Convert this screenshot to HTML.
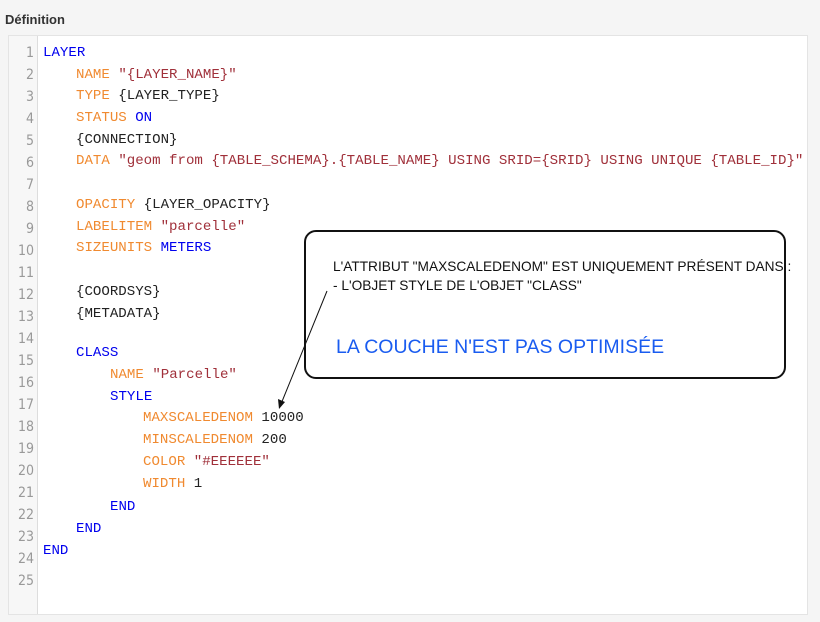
<!DOCTYPE html>
<html><head><meta charset="utf-8"><style>
body{margin:0;width:820px;height:622px;background:#f5f5f5;position:relative;overflow:hidden;font-family:"Liberation Sans",sans-serif}
.h{position:absolute;left:5px;top:12px;font-size:13px;font-weight:bold;color:#333}
.ed{position:absolute;left:8px;top:35px;width:800px;height:580px;background:#fff;border:1px solid #e4e4e4;box-sizing:border-box}
.g{position:absolute;left:0;top:0;width:28px;height:100%;background:#f7f7f7;border-right:1px solid #ddd}
.n{position:absolute;right:3px;font-size:14px;color:#999;font-family:"DejaVu Sans Condensed","Liberation Sans",sans-serif}
.c{position:absolute;left:34px;font-family:"Liberation Mono",monospace;font-size:14.1px;white-space:pre;color:#222}
.k{color:#0000ee}.p{color:#f08a30}.s{color:#a0303a}
.box{position:absolute;left:304px;top:230px;width:482px;height:149px;border:2px solid #111;border-radius:12px;box-sizing:border-box;background:#fff}
.t{position:absolute;font-size:13.7px;color:#111;white-space:nowrap}
</style></head><body>
<div class="h">Définition</div>
<div class="ed"><div class="g">
<div class="n" style="top:9px">1</div><div class="n" style="top:31px">2</div><div class="n" style="top:53px">3</div><div class="n" style="top:75px">4</div><div class="n" style="top:97px">5</div><div class="n" style="top:119px">6</div><div class="n" style="top:141px">7</div><div class="n" style="top:163px">8</div><div class="n" style="top:185px">9</div><div class="n" style="top:207px">10</div><div class="n" style="top:229px">11</div><div class="n" style="top:251px">12</div><div class="n" style="top:273px">13</div><div class="n" style="top:295px">14</div><div class="n" style="top:317px">15</div><div class="n" style="top:339px">16</div><div class="n" style="top:361px">17</div><div class="n" style="top:383px">18</div><div class="n" style="top:405px">19</div><div class="n" style="top:427px">20</div><div class="n" style="top:449px">21</div><div class="n" style="top:471px">22</div><div class="n" style="top:493px">23</div><div class="n" style="top:515px">24</div><div class="n" style="top:537px">25</div>
</div>
<div class="c" style="top:9px"><span class="k">LAYER</span></div>
<div class="c" style="top:31px;left:67px"><span class="p">NAME</span> <span class="s">"{LAYER_NAME}"</span></div>
<div class="c" style="top:52px;left:67px"><span class="p">TYPE</span> {LAYER_TYPE}</div>
<div class="c" style="top:74px;left:67px"><span class="p">STATUS</span> <span class="k">ON</span></div>
<div class="c" style="top:96px;left:67px">{CONNECTION}</div>
<div class="c" style="top:117px;left:67px"><span class="p">DATA</span> <span class="s">"geom from {TABLE_SCHEMA}.{TABLE_NAME} USING SRID={SRID} USING UNIQUE {TABLE_ID}"</span></div>
<div class="c" style="top:161px;left:67px"><span class="p">OPACITY</span> {LAYER_OPACITY}</div>
<div class="c" style="top:183px;left:67px"><span class="p">LABELITEM</span> <span class="s">"parcelle"</span></div>
<div class="c" style="top:204px;left:67px"><span class="p">SIZEUNITS</span> <span class="k">METERS</span></div>
<div class="c" style="top:248px;left:67px">{COORDSYS}</div>
<div class="c" style="top:270px;left:67px">{METADATA}</div>
<div class="c" style="top:309px;left:67px"><span class="k">CLASS</span></div>
<div class="c" style="top:331px;left:101px"><span class="p">NAME</span> <span class="s">"Parcelle"</span></div>
<div class="c" style="top:353px;left:101px"><span class="k">STYLE</span></div>
<div class="c" style="top:374px;left:134px"><span class="p">MAXSCALEDENOM</span> 10000</div>
<div class="c" style="top:396px;left:134px"><span class="p">MINSCALEDENOM</span> 200</div>
<div class="c" style="top:418px;left:134px"><span class="p">COLOR</span> <span class="s">"#EEEEEE"</span></div>
<div class="c" style="top:440px;left:134px"><span class="p">WIDTH</span> 1</div>
<div class="c" style="top:463px;left:101px"><span class="k">END</span></div>
<div class="c" style="top:485px;left:67px"><span class="k">END</span></div>
<div class="c" style="top:507px"><span class="k">END</span></div>
</div>
<div class="box"></div>
<div class="t" style="left:333px;top:259px">L'ATTRIBUT "MAXSCALEDENOM" EST UNIQUEMENT PRÉSENT DANS :</div>
<div class="t" style="left:333px;top:278px">- L'OBJET STYLE DE L'OBJET "CLASS"</div>
<div class="t" style="left:336px;top:336px;font-size:19.5px;color:#1a5cf0">LA COUCHE N'EST PAS OPTIMISÉE</div>
<svg style="position:absolute;left:0;top:0" width="820" height="622"><line x1="327" y1="291" x2="281" y2="404" stroke="#111" stroke-width="1"/><polygon points="279,409 278,399 285,402" fill="#111"/></svg>
</body></html>
